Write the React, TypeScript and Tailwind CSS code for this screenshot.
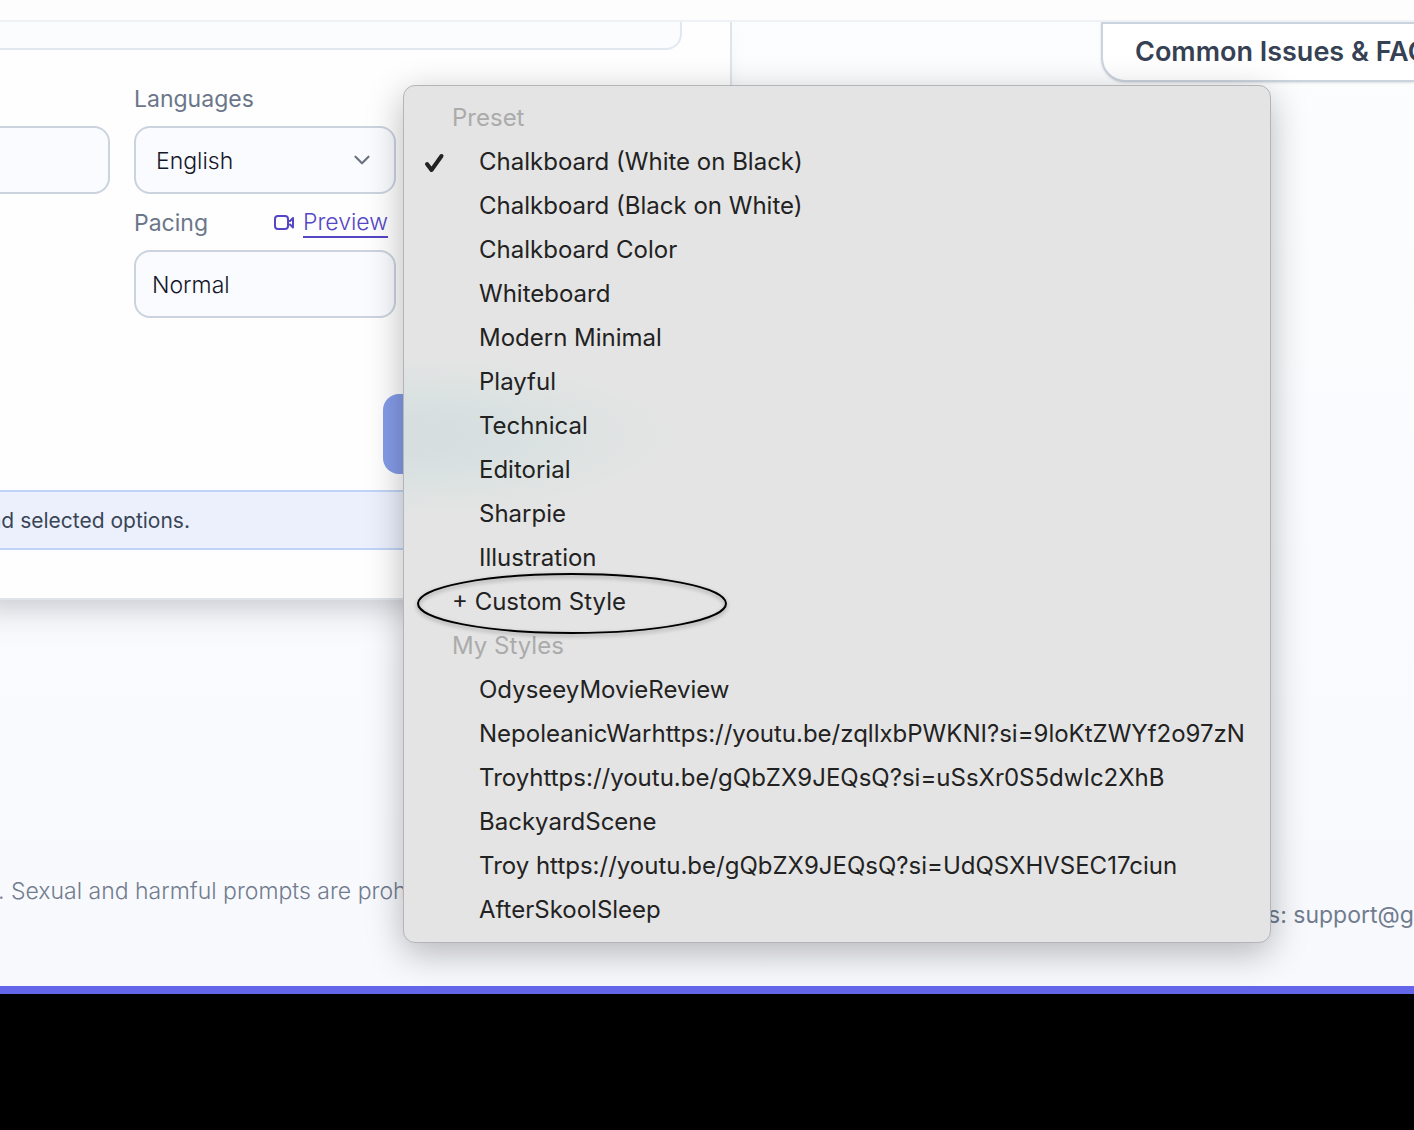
import { useState } from 'react';
import { ChevronDown } from 'lucide-react';
import clsx from 'clsx';

const presets = [
  'Chalkboard (White on Black)',
  'Chalkboard (Black on White)',
  'Chalkboard Color',
  'Whiteboard',
  'Modern Minimal',
  'Playful',
  'Technical',
  'Editorial',
  'Sharpie',
  'Illustration',
];

const myStyles = [
  'OdyseeyMovieReview',
  'NepoleanicWarhttps://youtu.be/zqllxbPWKNI?si=9loKtZWYf2o97zN',
  'Troyhttps://youtu.be/gQbZX9JEQsQ?si=uSsXr0S5dwIc2XhB',
  'BackyardScene',
  'Troy https://youtu.be/gQbZX9JEQsQ?si=UdQSXHVSEC17ciun',
  'AfterSkoolSleep',
];

const fieldClass =
  'h-[68px] w-full appearance-none rounded-2xl border-2 border-[#cbd3df] bg-[#fafbfe] pt-0.5 text-[23px] font-light text-[#14162a] outline-none';

function VideoIcon() {
  return (
    <svg width="22" height="18" viewBox="0 0 22 18" fill="none" stroke="currentColor" strokeWidth="2" strokeLinejoin="round" aria-hidden="true">
      <rect x="2" y="2" width="13" height="13" rx="3" />
      <path d="M15 7 L17 7 L20 4 V13.5 L17 10.5 H15" />
    </svg>
  );
}

function CheckIcon() {
  return (
    <svg width="22" height="22" viewBox="0 0 22 22" fill="none" stroke="currentColor" strokeWidth="4" strokeLinecap="round" strokeLinejoin="round" aria-hidden="true">
      <path d="M4 13 L8.5 19 L18.5 5" />
    </svg>
  );
}

interface StyleOptionProps {
  name: string;
  selected: boolean;
  onSelect: (name: string) => void;
}

function StyleOption({ name, selected, onSelect }: StyleOptionProps) {
  return (
    <button
      type="button"
      role="option"
      aria-selected={selected}
      onClick={() => onSelect(name)}
      className="flex h-11 w-full items-center whitespace-nowrap text-left"
    >
      <span className="w-[75px] shrink-0 pl-[19px]">{selected && <CheckIcon />}</span>
      {name}
    </button>
  );
}

function StyleMenu() {
  const [style, setStyle] = useState(presets[0]);

  return (
    <div
      role="listbox"
      aria-label="Style"
      className="absolute top-[15px] -left-[17px] z-10 w-[868px] rounded-xl border border-[#b4b5b8] bg-[#e4e4e4] bg-[radial-gradient(ellipse_270px_80px_at_0px_350px,#d6dee0_20%,#dde3e2_65%,#e4e4e4_100%)] py-[10px] text-2xl text-[#222222] shadow-[0_10px_36px_rgba(0,0,0,0.28)]"
    >
      <div className="flex h-11 items-center pl-12 text-[#ababab]">Preset</div>
      {presets.map((name) => (
        <StyleOption key={name} name={name} selected={name === style} onSelect={setStyle} />
      ))}
      <div className="relative">
        <button type="button" role="option" aria-selected={false} className="flex h-11 w-full items-center pl-12">
          + Custom Style
        </button>
        <svg
          className="pointer-events-none absolute -top-2 left-3 drop-shadow-[0_2px_2px_rgba(0,0,0,0.35)]"
          width="312"
          height="64"
          viewBox="0 0 312 64"
          fill="none"
          aria-hidden="true"
        >
          <ellipse cx="156" cy="31.5" rx="154" ry="29.5" stroke="#000" strokeWidth="2" />
        </svg>
      </div>
      <div className="flex h-11 items-center pl-12 text-[#ababab]">My Styles</div>
      {myStyles.map((name) => (
        <StyleOption key={name} name={name} selected={name === style} onSelect={setStyle} />
      ))}
    </div>
  );
}

export default function App() {
  return (
    <div className="min-h-screen bg-black font-['Inter','Liberation_Sans',sans-serif]">
      <header className="h-[22px] border-b-2 border-[#eef1f5] bg-[#fdfdfd]" />
      <main className="overflow-hidden border-b-8 border-[#6366e8] bg-linear-to-b from-[#fcfdfe] to-[#f8f9fd]">
        <div className="flex items-start justify-between">
          <form className="w-[732px] shrink-0 border-r-2 border-b-2 border-[#dfe3ea] bg-[#fefefe] pb-12 shadow-[-24px_6px_32px_rgba(30,30,50,0.25)]">
            <div className="pr-12">
              <textarea
                aria-label="Prompt"
                className="block h-7 w-full resize-none rounded-br-2xl border-r-2 border-b-2 border-[#e2e8f0] bg-[#fafcfe] outline-none"
              />
              <div className="grid grid-cols-[110px_1fr_1fr] gap-x-6 pt-5">
                <div className="pt-14">
                  <input
                    aria-label="Duration"
                    className="h-[68px] w-full rounded-r-2xl border-2 border-l-0 border-[#cbd3df] bg-[#fafbfe] outline-none"
                  />
                </div>
                <div>
                  <label htmlFor="languages" className="flex h-14 items-center pt-0.5 text-[23px] text-[#6b7689]">
                    Languages
                  </label>
                  <div className="relative">
                    <select id="languages" className={clsx(fieldClass, 'pl-5')}>
                      <option>English</option>
                    </select>
                    <ChevronDown
                      size={26}
                      strokeWidth={2}
                      className="pointer-events-none absolute top-[21px] right-[21px] text-[#6d7280]"
                    />
                  </div>
                  <div className="flex h-14 items-center justify-between pt-0.5 pr-2 text-[23px]">
                    <label htmlFor="pacing" className="text-[#6b7689]">
                      Pacing
                    </label>
                    <a href="#preview" className="flex items-center gap-2 font-light text-[#5546c4]">
                      <VideoIcon />
                      <span className="border-b-2 border-[#5546c4] leading-7">Preview</span>
                    </a>
                  </div>
                  <select id="pacing" className={clsx(fieldClass, 'pl-4')}>
                    <option>Normal</option>
                  </select>
                </div>
                <div className="relative">
                  <StyleMenu />
                </div>
              </div>
            </div>
            <button
              type="button"
              aria-label="Generate"
              className="mt-[76px] ml-[383px] block h-20 w-60 rounded-2xl bg-[#859ce8]"
            />
            <div className="mt-4 flex h-[60px] items-center border-y-2 border-[#bfd4f6] bg-[#ecf0fd]">
              <p className="flex w-[190px] justify-end pt-0.5 whitespace-nowrap text-[21px] text-[#3a4556]">
                nd selected options.
              </p>
            </div>
          </form>
          <button
            type="button"
            className="h-[60px] w-[313px] shrink-0 overflow-hidden rounded-bl-3xl border-2 border-r-0 border-[#cbd3de] bg-white pl-8 text-left text-[27px] font-semibold whitespace-nowrap text-[#364154] shadow-sm"
          >
            Common Issues &amp; FAQ
          </button>
        </div>
        <footer className="flex items-start justify-between pt-[273px] pb-[53px] text-[23px] leading-9 text-[#717c8f]">
          <p className="-ml-0.5 font-light whitespace-nowrap">. Sexual and harmful prompts are prohibited.</p>
          <p className="w-[146px] pt-6 whitespace-nowrap">s: support@go</p>
        </footer>
      </main>
    </div>
  );
}
